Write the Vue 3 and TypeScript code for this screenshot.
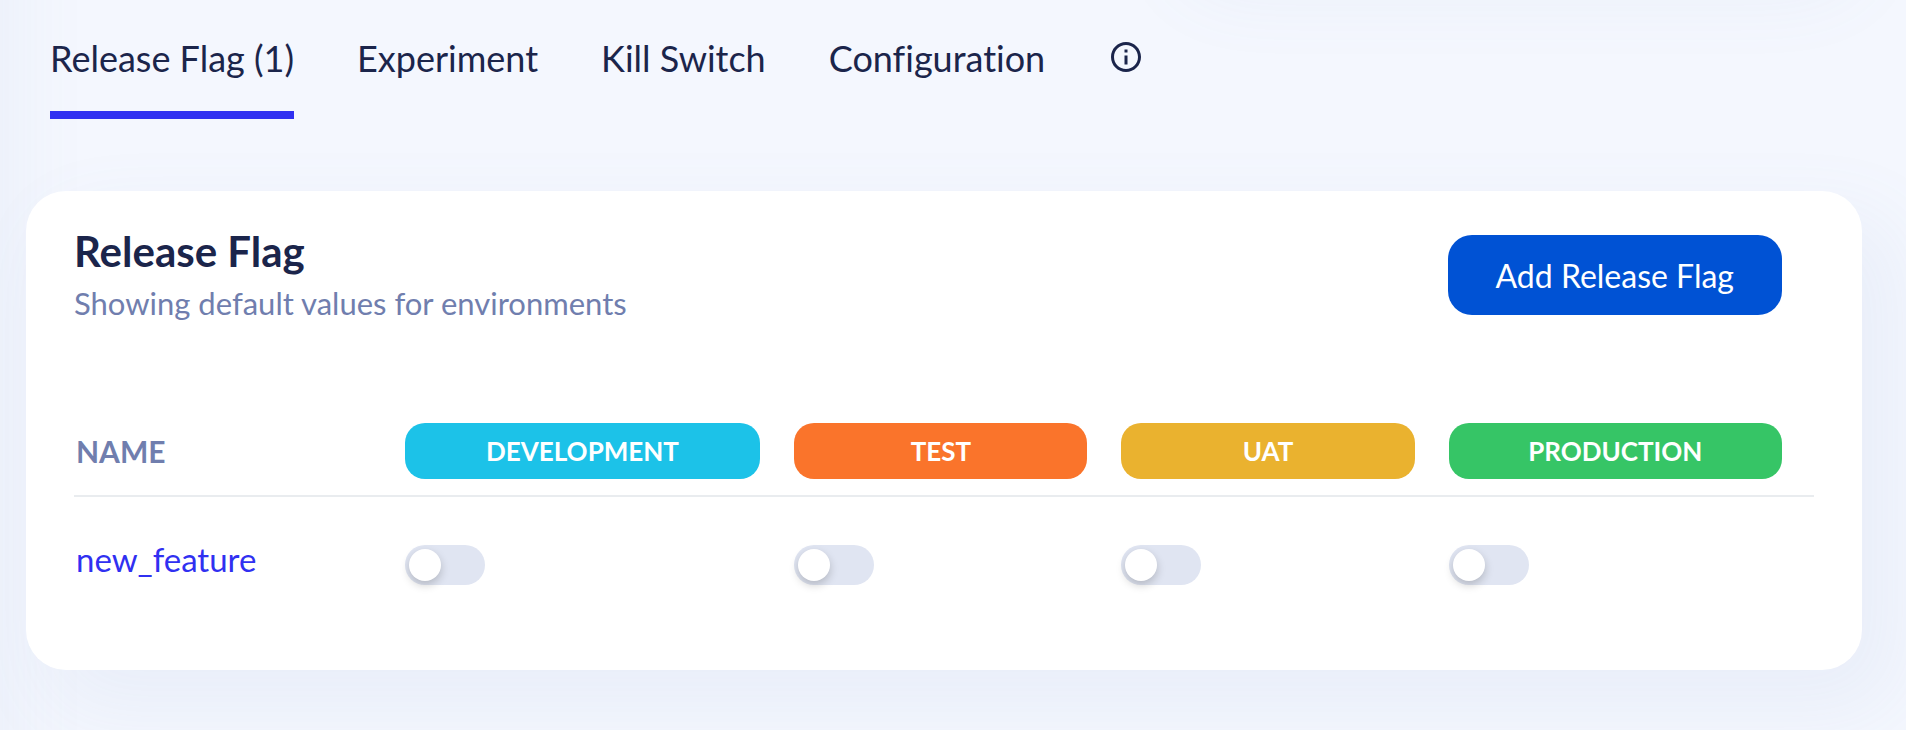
<script setup lang="ts">
import { ref } from 'vue'

interface Environment {
  id: string
  label: string
}

interface Flag {
  name: string
  states: Record<string, boolean>
}

const tabs = ['Release Flag (1)', 'Experiment', 'Kill Switch', 'Configuration']
const activeTab = ref(tabs[0])

const environments: Environment[] = [
  { id: 'development', label: 'DEVELOPMENT' },
  { id: 'test', label: 'TEST' },
  { id: 'uat', label: 'UAT' },
  { id: 'production', label: 'PRODUCTION' },
]

const flags = ref<Flag[]>([
  {
    name: 'new_feature',
    states: { development: false, test: false, uat: false, production: false },
  },
])
</script>

<template>
  <div class="page">
    <div class="side-shade" aria-hidden="true"></div>
    <div class="top-shade" aria-hidden="true"></div>

    <nav class="tabs" role="tablist" aria-label="Flag types">
      <button
        v-for="tab in tabs"
        :key="tab"
        type="button"
        role="tab"
        class="tab"
        :class="{ active: tab === activeTab }"
        :aria-selected="tab === activeTab"
        @click="activeTab = tab"
      >
        {{ tab }}
      </button>
      <button type="button" class="info" aria-label="About flag types">
        <svg viewBox="0 0 24 24" width="36" height="36" fill="currentColor" aria-hidden="true">
          <path d="M11 7h2v2h-2zm0 4h2v6h-2zm1-9C6.48 2 2 6.48 2 12s4.48 10 10 10 10-4.48 10-10S17.520 2 12 2zm0 18c-4.41 0-8-3.590-8-8s3.590-8 8-8 8 3.590 8 8-3.590 8-8 8z" />
        </svg>
      </button>
    </nav>

    <main class="card">
      <header class="card-head">
        <div>
          <h1 class="title">Release Flag</h1>
          <p class="subtitle">Showing default values for environments</p>
        </div>
        <button type="button" class="add">Add Release Flag</button>
      </header>

      <table class="flags">
        <colgroup>
          <col class="col-name" />
          <col v-for="env in environments" :key="env.id" :class="'col-' + env.id" />
        </colgroup>
        <thead>
          <tr>
            <th scope="col" class="name-head">NAME</th>
            <th v-for="env in environments" :key="env.id" scope="col">
              <span class="pill" :class="env.id">{{ env.label }}</span>
            </th>
          </tr>
        </thead>
        <tbody>
          <tr v-for="flag in flags" :key="flag.name">
            <td class="name-cell"><a href="#" class="flag-link">{{ flag.name }}</a></td>
            <td v-for="env in environments" :key="env.id">
              <input
                v-model="flag.states[env.id]"
                type="checkbox"
                role="switch"
                class="switch"
                :aria-label="flag.name + ' in ' + env.label"
              />
            </td>
          </tr>
        </tbody>
      </table>
    </main>
  </div>
</template>

<style>
body {
  background: #f4f7fe;
}
</style>

<style scoped>
.page {
  --shade: 28px 34px 80px 8px rgba(112, 140, 190, 0.08);
  --navy: #1b254b;
  position: relative;
  box-sizing: border-box;
  min-height: 100vh;
  overflow: hidden;
  padding: 32px 44px 60px 26px;
  background: #f4f7fe;
  color: var(--navy);
  font-family: Lato, 'Open Sans', sans-serif;
  font-variant-ligatures: none;
}

.side-shade,
.top-shade {
  position: absolute;
  box-shadow: var(--shade);
  pointer-events: none;
}

.side-shade {
  top: -200px;
  bottom: -200px;
  left: -328px;
  width: 300px;
}

.top-shade {
  top: -252px;
  right: 84px;
  width: 660px;
  height: 200px;
  border-radius: 40px;
}

.tabs {
  position: relative;
  display: flex;
  align-items: flex-start;
  gap: 63px;
  padding: 0 24px;
}

button {
  font-family: inherit;
  font-variant-ligatures: inherit;
  cursor: pointer;
}

.tab {
  padding: 0 0 26px;
  border: 0;
  border-bottom: 8px solid transparent;
  background: none;
  color: var(--navy);
  font-size: 36px;
  line-height: 53px;
  white-space: nowrap;
}

.tab.active {
  border-bottom-color: #3030f1;
}

.info {
  display: flex;
  padding: 7px 0;
  border: 0;
  background: none;
  color: var(--navy);
}

.card {
  position: relative;
  margin-top: 72px;
  padding: 44px 48px 70px;
  border-radius: 40px;
  background: #fff;
  box-shadow: var(--shade);
}

.card-head {
  display: flex;
  justify-content: space-between;
  align-items: flex-start;
  padding-right: 32px;
}

.title {
  margin: 0;
  font-size: 42px;
  font-weight: 700;
  line-height: 32px;
}

.subtitle {
  margin: 12px 0 0;
  color: #707eae;
  font-size: 31px;
  line-height: 48px;
}

.add {
  height: 80px;
  padding: 0 48px;
  border: 0;
  border-radius: 24px;
  background: #0052d4;
  color: #fff;
  font-size: 32px;
  white-space: nowrap;
}

.flags {
  width: 100%;
  margin-top: 80px;
  border-collapse: collapse;
  table-layout: fixed;
}

.col-name {
  width: 19%;
}

.col-test,
.col-uat {
  width: 18.8%;
}

.col-development {
  width: 22.4%;
}

th,
td {
  padding: 0 34px 0 0;
  text-align: left;
  vertical-align: middle;
}

thead th {
  padding-top: 16px;
  padding-bottom: 16px;
  border-bottom: 2px solid #e9ecef;
}

thead th:last-child {
  padding-right: 32px;
}

.flags .name-head,
.flags .name-cell {
  padding-left: 2px;
}

.name-head {
  color: #707eae;
  font-size: 30px;
  font-weight: 700;
}

.pill {
  display: block;
  border-radius: 20px;
  color: #fff;
  font-size: 26px;
  font-weight: 700;
  line-height: 56px;
  text-align: center;
}

.development {
  background: #1cc2e8;
}

.test {
  background: #fa742b;
}

.uat {
  background: #eab22f;
}

.production {
  background: #36c566;
}

tbody td {
  box-sizing: border-box;
  height: 104px;
  padding-top: 32px;
}

tbody .name-cell {
  padding-top: 20px;
}

.flag-link {
  color: #3030f1;
  font-size: 33px;
  text-decoration: none;
}

.switch {
  display: block;
  box-sizing: border-box;
  width: 80px;
  height: 40px;
  margin: 0;
  padding: 4px;
  appearance: none;
  border-radius: 20px;
  background: #e0e5f2;
  cursor: pointer;
}

.switch::before {
  content: '';
  display: block;
  width: 32px;
  height: 32px;
  border-radius: 50%;
  background: #fff;
  box-shadow: 0 4px 10px rgba(0, 0, 0, 0.2);
}

.switch:checked {
  background: #3030f1;
}

.switch:checked::before {
  margin-left: 40px;
}
</style>
